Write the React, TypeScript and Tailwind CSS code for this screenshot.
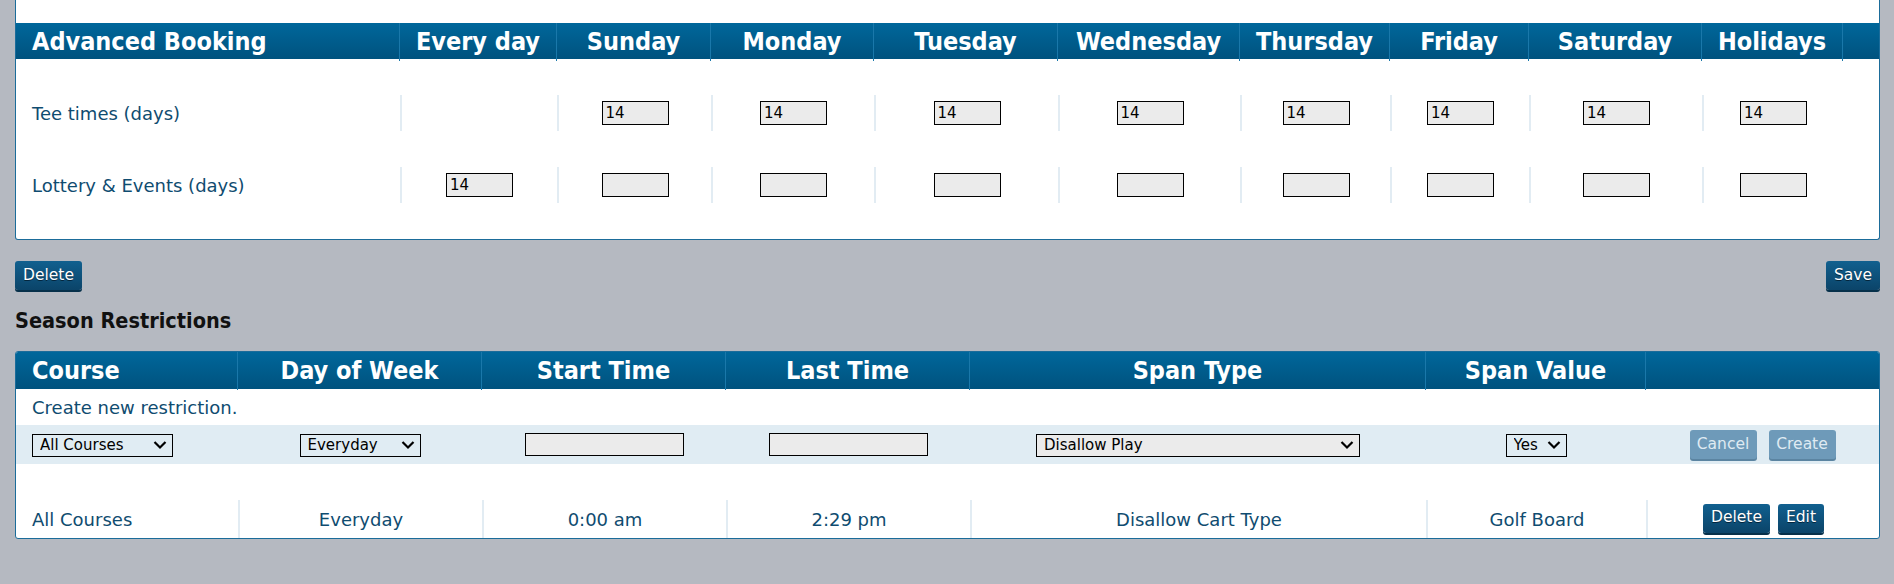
import React from 'react';

const days = ['Every day', 'Sunday', 'Monday', 'Tuesday', 'Wednesday', 'Thursday', 'Friday', 'Saturday', 'Holidays'];

const bookingRows = [
  { label: 'Tee times (days)', values: ['', '14', '14', '14', '14', '14', '14', '14', '14'], empty: [true, false, false, false, false, false, false, false, false] },
  { label: 'Lottery & Events (days)', values: ['14', '', '', '', '', '', '', '', ''], empty: [false, false, false, false, false, false, false, false, false] },
];

const topGrid = 'grid grid-cols-[384px_157px_154px_163px_184px_182px_150px_139px_173px_141px_1fr]';
const botGrid = 'grid grid-cols-[222px_244px_244px_244px_456px_220px_1fr]';

const Chevron = () => (
  <svg className="pointer-events-none absolute right-[6px] top-1/2 h-[9px] w-[14px] -translate-y-1/2" viewBox="0 0 14 9">
    <path d="M1.5 1.5 7 7l5.5-5.5" fill="none" stroke="black" strokeWidth="2.2" />
  </svg>
);

const Dropdown = ({ value, className }: { value: string; className: string }) => (
  <div className={`relative ${className}`}>
    <select
      defaultValue={value}
      className="h-[23px] w-full appearance-none rounded-none border border-black pl-[7px] text-[15px] leading-none text-black outline-none"
    >
      <option>{value}</option>
    </select>
    <Chevron />
  </div>
);

const DarkButton = ({ children }: { children: React.ReactNode }) => (
  <button className="h-[29px] rounded-[3px] bg-gradient-to-b from-[#11608f] to-[#0b4469] px-[8px] text-[15.5px] text-white shadow-[0_2px_0_#06304a] [text-shadow:0_1px_0_#03263d]">
    {children}
  </button>
);

const DisabledButton = ({ children }: { children: React.ReactNode }) => (
  <button className="h-[29px] w-[67px] rounded-[3px] bg-[#6e9ab9] text-[15.5px] text-[#dfeaf2] shadow-[0_2px_0_#5b84a1]">
    {children}
  </button>
);

const heading = "font-['DejaVu_Sans_Condensed','DejaVu_Sans',sans-serif] font-bold";

export default function App() {
  return (
    <main className="min-h-[584px] bg-[#b5b9c1] pl-[15px] pr-[14px] pb-[47px] font-['DejaVu_Sans',sans-serif] text-[#0f4c70]">
      <section className="rounded-b-[3px] border border-t-0 border-[#1b6c9a] bg-white pt-[23px] pb-[36px]">
        <div className={`${topGrid} h-[36px] bg-gradient-to-b from-[#00679b] to-[#00527e] text-[25px] text-white ${heading}`}>
          <div className="flex items-center border-r border-[#1a78aa] pl-4">Advanced Booking</div>
          {days.map((day) => (
            <div key={day} className="flex items-center justify-center border-r border-[#1a78aa]">
              {day}
            </div>
          ))}
          <div />
        </div>

        {bookingRows.map((row) => (
          <div key={row.label} className={`${topGrid} mt-[36px] h-[36px]`}>
            <div className="flex items-center pl-4 text-[18px]">{row.label}</div>
            {row.values.map((v, i) => (
              <div key={i} className="flex items-center justify-center border-l-2 border-[#e2ecf3]">
                {!row.empty[i] && (
                  <input
                    defaultValue={v}
                    className="h-[24px] w-[67px] border border-black bg-[#ebebeb] px-[3px] text-[15px] text-black outline-none"
                  />
                )}
              </div>
            ))}
            <div />
          </div>
        ))}
      </section>

      <div className="mt-[21px] flex justify-between">
        <DarkButton>Delete</DarkButton>
        <DarkButton>Save</DarkButton>
      </div>

      <h2 className={`mt-[18px] h-[25px] text-[21.5px] leading-[25px] text-[#111] ${heading}`}>Season Restrictions</h2>

      <section className="mt-[18px] overflow-hidden rounded-[3px] border border-[#1b6c9a] bg-white">
        <div className={`${botGrid} h-[37px] bg-gradient-to-b from-[#00679b] to-[#00527e] text-[25px] text-white ${heading}`}>
          <div className="flex items-center border-r border-[#1a78aa] pl-4">Course</div>
          {['Day of Week', 'Start Time', 'Last Time', 'Span Type', 'Span Value'].map((h) => (
            <div key={h} className="flex items-center justify-center border-r border-[#1a78aa]">
              {h}
            </div>
          ))}
          <div />
        </div>

        <div className="flex h-[36px] items-center pl-4 text-[18px]">Create new restriction.</div>

        <div className={`${botGrid} h-[39px] bg-[#e0ecf3]`}>
          <div className="flex items-center pl-4">
            <Dropdown value="All Courses" className="w-[141px]" />
          </div>
          <div className="flex items-center justify-center">
            <Dropdown value="Everyday" className="w-[121px]" />
          </div>
          <div className="flex items-center justify-center">
            <input className="h-[23px] w-[159px] border border-black bg-[#ebebeb] outline-none" />
          </div>
          <div className="flex items-center justify-center">
            <input className="h-[23px] w-[159px] border border-black bg-[#ebebeb] outline-none" />
          </div>
          <div className="flex items-center justify-center">
            <Dropdown value="Disallow Play" className="w-[324px] [&_select]:bg-[#ebebeb]" />
          </div>
          <div className="flex items-center justify-center">
            <Dropdown value="Yes" className="w-[61px]" />
          </div>
          <div className="flex items-center justify-center gap-[12px]">
            <DisabledButton>Cancel</DisabledButton>
            <DisabledButton>Create</DisabledButton>
          </div>
        </div>

        <div className={`${botGrid} mt-[36px] h-[38px] text-[18px]`}>
          <div className="flex items-center pl-4">All Courses</div>
          {['Everyday', '0:00 am', '2:29 pm', 'Disallow Cart Type', 'Golf Board'].map((c) => (
            <div key={c} className="flex items-center justify-center border-l-2 border-[#e2ecf3]">
              {c}
            </div>
          ))}
          <div className="flex items-center justify-center gap-[8px] border-l-2 border-[#e2ecf3] pb-[2px]">
            <DarkButton>Delete</DarkButton>
            <DarkButton>Edit</DarkButton>
          </div>
        </div>
      </section>
    </main>
  );
}
